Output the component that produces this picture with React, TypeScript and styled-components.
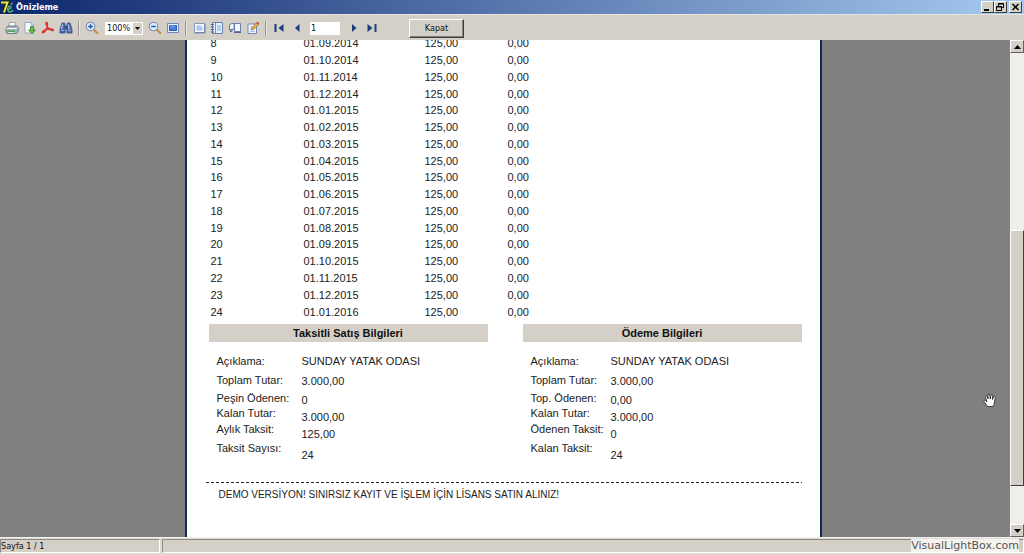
import React from 'react';
import styled, { createGlobalStyle } from 'styled-components';

const Global = createGlobalStyle`
  * { box-sizing: border-box; }
  body { margin: 0; background: #d4d0c8; }
  button, input, select { font: inherit; color: inherit; }
`;

const ui = `'DejaVu Sans Condensed', 'DejaVu Sans', Tahoma, sans-serif`;

const Window = styled.div`
  display: grid;
  grid-template-rows: auto minmax(0, 1fr) auto;
  height: 100vh;
  overflow: hidden;
  font: 9px/12px ${ui};
  color: #111;
`;

const Header = styled.header`
  background: #d4d0c8;
`;

const TitleBar = styled.div`
  display: flex;
  align-items: center;
  height: 14px;
  padding-right: 2px;
  background: linear-gradient(90deg, #0c266c 0%, #a6caf0 100%);
  color: #fff;
`;

const Title = styled.h1`
  flex: 1;
  margin: 0 0 0 2px;
  font: bold 9px/14px ${ui};
`;

const Caption = styled.div<{ $gap?: boolean }>`
  display: flex;
  margin-left: ${(p) => (p.$gap ? '2px' : '0')};
`;

const CaptionButton = styled.button`
  display: flex;
  width: 13px;
  height: 12px;
  padding: 0;
  border: 1px solid;
  border-color: #fff #404040 #404040 #fff;
  background: #d4d0c8;
`;

const Toolbar = styled.div`
  display: flex;
  align-items: center;
  height: 26px;
  padding: 1px 3px 0;
  border-top: 1px solid #e8e6e0;
`;

const ToolButton = styled.button`
  display: flex;
  align-items: center;
  justify-content: center;
  flex: none;
  width: 18px;
  height: 20px;
  padding: 0;
  border: 0;
  background: none;
`;

const Separator = styled.span`
  flex: none;
  width: 2px;
  height: 15px;
  margin: 0 3px;
  border-left: 1px solid #98958e;
  border-right: 1px solid #e8e6e0;
`;

const ZoomField = styled.div`
  position: relative;
  flex: none;
  width: 38px;
  height: 13px;
  margin: 0 3px 0 4px;
  background: #fff;
  select {
    display: block;
    appearance: none;
    width: 100%;
    height: 13px;
    padding: 0 0 0 2px;
    border: 0;
    background: none;
    line-height: 13px;
  }
  svg {
    position: absolute;
    top: 1px;
    right: 1px;
    pointer-events: none;
  }
`;

const PageInput = styled.input`
  flex: none;
  width: 30px;
  height: 13px;
  margin: 0 5px 0 4px;
  padding: 0 1px;
  border: 0;
  background: #fff;
`;

const CloseButton = styled.button`
  flex: none;
  width: 55px;
  height: 19px;
  margin-left: 28px;
  padding: 0;
  border: 1px solid;
  border-color: #fff #404040 #404040 #fff;
  box-shadow: inset -1px -1px #808080;
  background: #d4d0c8;
`;

const Viewport = styled.main`
  display: flex;
  min-height: 0;
  background: #808080;
`;

const Canvas = styled.div`
  position: relative;
  flex: 1;
  display: flex;
  justify-content: center;
  min-width: 0;
  padding-right: 4px;
  overflow: hidden;
`;

const Sheet = styled.article`
  flex: 0 1 637px;
  padding: 0 18px 0 22px;
  border: solid #14294f;
  border-width: 0 2px;
  background: #fff;
  font: 11px/16px 'Liberation Sans', Arial, sans-serif;
  color: #222;
`;

const Installments = styled.table`
  width: 100%;
  height: 285px;
  margin-top: -5px;
  border-collapse: collapse;
  table-layout: fixed;
  td { padding: 0 0 0 2px; line-height: 16px; }
`;

const Panels = styled.div`
  display: grid;
  grid-template-columns: 279px 279px;
  justify-content: space-between;
  margin-top: 4px;
`;

const PanelTitle = styled.h2`
  margin: 0;
  background: #d4d0c8;
  font-size: 11px;
  line-height: 18px;
  text-align: center;
  color: #111;
`;

const Fields = styled.div<{ $labelWidth: number }>`
  display: grid;
  grid-template-columns: ${(p) => p.$labelWidth}px 1fr;
  padding: 11px 0 0 8px;
`;

const Labels = styled.div`
  display: grid;
  grid-template-rows: 19px 18px 15px 16px 19px 16px;
`;

const Values = styled.div`
  display: grid;
  grid-template-rows: 20px 19px 17px 17px 21px 16px;
`;

const Notice = styled.p`
  margin: 0 0 0 10px;
  font-size: 10px;
  line-height: 14px;
  white-space: nowrap;
`;

const Rule = styled.svg`
  display: block;
  width: calc(100% + 3px);
  height: 1px;
  margin: 19px 0 5px -3px;
`;

const HandCursor = styled.svg`
  position: absolute;
  right: 13px;
  top: 353px;
`;

const Scrollbar = styled.div`
  display: grid;
  grid-template-rows: 13px 177fr 256fr 38fr 13px;
  width: 14px;
  background: #efeeea;
`;

const ScrollButton = styled.button<{ $row: number }>`
  grid-row: ${(p) => p.$row};
  display: flex;
  align-items: center;
  justify-content: center;
  padding: 0;
  border: 1px solid;
  border-color: #fff #606060 #606060 #fff;
  background: #d4d0c8;
`;

const Thumb = styled.div`
  grid-row: 3;
  border: 1px solid;
  border-color: #fff #404040 #404040 #fff;
  background: #d4d0c8;
`;

const Status = styled.footer`
  position: relative;
  display: grid;
  grid-template-columns: 160px 1fr;
  gap: 2px;
  height: 18px;
  padding: 1px 0 3px;
  border-top: 1px solid #f4f2ee;
  background: #dedbd4;
`;

const StatusPane = styled.div`
  border: 1px solid;
  border-color: #8c8982 #fff #fff #8c8982;
  background: #d4d0c8;
`;

const Watermark = styled.a`
  position: absolute;
  right: 5px;
  top: 1px;
  background: #f4f3f0;
  color: #555;
  font: 11px/13px 'DejaVu Sans', Verdana, sans-serif;
  text-decoration: none;
`;

const Icon = ({ children }: { children: React.ReactNode }) => (
  <svg width="14" height="14" viewBox="0 0 14 14" fill="none">{children}</svg>
);

const Lens = ({ minus }: { minus?: boolean }) => (
  <Icon>
    <path d="M8.5 8.5 12.3 12" stroke="#c89038" strokeWidth="2.2" strokeLinecap="round" />
    <circle cx="5.5" cy="5.5" r="4.3" fill="#dcebfa" stroke="#7890b4" strokeWidth="1.1" />
    <path d={minus ? 'M3.2 5.5h4.6' : 'M3.2 5.5h4.6M5.5 3.2v4.6'} stroke="#28549c" strokeWidth="1.4" />
  </Icon>
);

const icons = {
  print: (
    <Icon>
      <path d="M4.5 1.5h6l-1 5h-6z" fill="#fff" stroke="#8492a8" strokeWidth=".8" />
      <path d="M1 7 3 5h9.5l.7 1.5v4L11.5 12.5H2L1 11z" fill="#a9b3c2" stroke="#56647c" strokeWidth=".8" />
      <path d="M1.5 7.5h9.8l1.5-1.8" stroke="#eef2f8" />
      <path d="M2.5 9.5h7.5v2H2.5z" fill="#48a64c" />
      <path d="M3 11.5h6.5" stroke="#d7f0d2" />
    </Icon>
  ),
  save: (
    <Icon>
      <path d="M2 1.5h6l2.5 2.5v8H2z" fill="#f8fbff" stroke="#8ca0c0" strokeWidth=".9" />
      <path d="M8 1.5V4h2.5" stroke="#8ca0c0" strokeWidth=".8" />
      <path d="M7.5 5.5h3V9h2L9 12.8 5.5 9h2z" fill="#68b84e" stroke="#34822c" strokeWidth=".8" />
    </Icon>
  ),
  pdf: (
    <Icon>
      <path d="M5.2 1.5c1.8-.5 1.3 2.7.7 5C5.1 9.3 3 12 1.7 11.8.3 11.2 3 9 6.3 8.3c3-.7 6.5-.5 6 .8-.5 1.2-3.6-.3-5.2-2.4C5.5 4.8 4.2 2 5.2 1.5z" stroke="#d83830" strokeWidth="1.5" />
    </Icon>
  ),
  find: (
    <Icon>
      <path d="M3 2h2.5l.8 3-.3 7H1V8.5zM8.500 2H11l2 6.500V12H8l-.3-7z" fill="#5270a8" stroke="#2c4880" strokeWidth=".8" />
      <path d="M5.500 5h3v3h-3z" fill="#34508c" />
      <path d="M3.500 3.500 2.500 8M9.500 3.500l.5 4.500" stroke="#c2d6f4" />
      <path d="M2 9.500h3M9 9.500h3" stroke="#90acd8" />
    </Icon>
  ),
  fit: (
    <Icon>
      <path d="M1.500 2.500h11v9h-11z" fill="#e8f0fc" stroke="#6c88c0" />
      <path d="M3.500 4.500h7v5h-7z" fill="#4c80d4" stroke="#2c58ac" />
      <path d="M4 5h5" stroke="#8cb4f0" />
    </Icon>
  ),
  page: (
    <Icon>
      <path d="M2.500 2.500h10v9h-10z" fill="#f2f8ff" stroke="#8298bc" />
      <path d="M5 5h3.500L10 6.500V9H5z" fill="#b6cef0" stroke="#8caad8" strokeWidth=".7" />
      <path d="M2.500 12h10.500V3" stroke="#566c94" strokeWidth=".7" />
    </Icon>
  ),
  outline: (
    <Icon>
      <path d="M2.500 1.500h10v11h-10z" fill="#e4eefc" stroke="#6880ac" />
      <path d="M5.500 2v10" stroke="#7a92bc" />
      <path d="M7 4h4v6H7z" fill="#b8d0f4" />
      <path d="M1 3.500h3M1 6h3M1 8.500h3M1 11h3" stroke="#465f8c" />
    </Icon>
  ),
  thumbs: (
    <Icon>
      <path d="M1.500 3.500 4 2.500h2v5L4 8.500H1.500zM6.500 2.500h6v8h-6z" fill="#f4f8fe" stroke="#6880a8" />
      <path d="M1.500 8.500 3 11l1.500-2.500M6 11.500h7" stroke="#50648a" />
    </Icon>
  ),
  edit: (
    <Icon>
      <path d="M2 3h8.500v9.500H2z" fill="#eef5ff" stroke="#7088b4" />
      <path d="M4 6h3M4 8h2M4 10.500h5" stroke="#a2badc" />
      <path d="m5.500 9 .7-2.500 4.500-5 2 1.500L8 8z" fill="#e9b64c" stroke="#8c6430" strokeWidth=".7" />
      <path d="m10.700 1.500 2 1.500" stroke="#cc4450" strokeWidth="2" />
    </Icon>
  ),
  first: <Icon><path d="M2.500 3h2v8h-2zM11.500 3v8l-5-4z" fill="#1c3c80" /></Icon>,
  prev: <Icon><path d="M9.500 3v8L5 7z" fill="#1c3c80" /></Icon>,
  next: <Icon><path d="M5 3v8l4.500-4z" fill="#1c3c80" /></Icon>,
  last: <Icon><path d="M9.500 3h2v8h-2zM2.500 3v8l5-4z" fill="#1c3c80" /></Icon>,
};

const Tool = ({ label, children }: { label: string; children: React.ReactNode }) => (
  <ToolButton type="button" aria-label={label}>{children}</ToolButton>
);

const rows = Array.from({ length: 17 }, (_, i) => {
  const month = (8 + i) % 12;
  const year = 2014 + Math.floor((8 + i) / 12);
  return { no: 8 + i, date: `01.${String(month + 1).padStart(2, '0')}.${year}` };
});

const sale = [
  ['Açıklama:', 'SUNDAY YATAK ODASI'],
  ['Toplam Tutar:', '3.000,00'],
  ['Peşin Ödenen:', '0'],
  ['Kalan Tutar:', '3.000,00'],
  ['Aylık Taksit:', '125,00'],
  ['Taksit Sayısı:', '24'],
];

const payment = [
  ['Açıklama:', 'SUNDAY YATAK ODASI'],
  ['Toplam Tutar:', '3.000,00'],
  ['Top. Ödenen:', '0,00'],
  ['Kalan Tutar:', '3.000,00'],
  ['Ödenen Taksit:', '0'],
  ['Kalan Taksit:', '24'],
];

const Panel = ({ title, data, labelWidth }: { title: string; data: string[][]; labelWidth: number }) => (
  <section>
    <PanelTitle>{title}</PanelTitle>
    <Fields $labelWidth={labelWidth}>
      <Labels>{data.map(([label]) => <span key={label}>{label}</span>)}</Labels>
      <Values>{data.map(([label, value]) => <span key={label}>{value}</span>)}</Values>
    </Fields>
  </section>
);

export default function App() {
  return (
    <Window>
      <Global />
      <Header>
        <TitleBar>
          <svg width="14" height="14" viewBox="0 0 14 14" fill="none">
            <path d="M1 2.500h6.500L4 12.500" stroke="#203008" strokeWidth="3.400" />
            <path d="M1 2.500h6.500L4 12.500" stroke="#f0e040" strokeWidth="2" />
            <path d="M7 9.500c3.500 0 5-2 3.500-3S7 8 8 10.500s3.500 1.500 5-.5M11 5l1.500-2.500" stroke="#58b878" strokeWidth="1.400" />
          </svg>
          <Title>Önizleme</Title>
          <Caption>
            <CaptionButton type="button" aria-label="Simge durumuna küçült">
              <svg width="10" height="10"><path d="M2 7h5v2H2z" fill="#000" /></svg>
            </CaptionButton>
            <CaptionButton type="button" aria-label="Önceki boyut">
              <svg width="10" height="10" fill="none" stroke="#000">
                <path d="M3.500 4V1.500h5v4H7M3 2h6M1.500 4.500h5v4h-5zM1 5h6" />
              </svg>
            </CaptionButton>
          </Caption>
          <Caption $gap>
            <CaptionButton type="button" aria-label="Kapat">
              <svg width="11" height="10"><path d="m2.500 2 6 6M8.500 2l-6 6" stroke="#000" strokeWidth="1.500" /></svg>
            </CaptionButton>
          </Caption>
        </TitleBar>
        <Toolbar>
          <Tool label="Yazdır">{icons.print}</Tool>
          <Tool label="Kaydet">{icons.save}</Tool>
          <Tool label="PDF">{icons.pdf}</Tool>
          <Tool label="Bul">{icons.find}</Tool>
          <Separator />
          <Tool label="Yakınlaştır"><Lens /></Tool>
          <ZoomField>
            <select aria-label="Yakınlık" defaultValue="100%"><option>100%</option></select>
            <svg width="9" height="11"><path d="M0 0h9v11H0z" fill="#d4d0c8" /><path d="M2 4h5L4.500 7z" fill="#000" /></svg>
          </ZoomField>
          <Tool label="Uzaklaştır"><Lens minus /></Tool>
          <Tool label="Tam sayfa">{icons.fit}</Tool>
          <Separator />
          <Tool label="Sayfa">{icons.page}</Tool>
          <Tool label="Anahat">{icons.outline}</Tool>
          <Tool label="Küçük resimler">{icons.thumbs}</Tool>
          <Tool label="Düzenle">{icons.edit}</Tool>
          <Separator />
          <Tool label="İlk sayfa">{icons.first}</Tool>
          <Tool label="Önceki sayfa">{icons.prev}</Tool>
          <PageInput aria-label="Sayfa numarası" defaultValue="1" />
          <Tool label="Sonraki sayfa">{icons.next}</Tool>
          <Tool label="Son sayfa">{icons.last}</Tool>
          <CloseButton type="button">Kapat</CloseButton>
        </Toolbar>
      </Header>
      <Viewport>
        <Canvas>
          <Sheet>
            <Installments>
              <colgroup>
                <col width="93" /><col width="121" /><col width="83" /><col />
              </colgroup>
              <tbody>
                {rows.map((r) => (
                  <tr key={r.no}><td>{r.no}</td><td>{r.date}</td><td>125,00</td><td>0,00</td></tr>
                ))}
              </tbody>
            </Installments>
            <Panels>
              <Panel title="Taksitli Satış Bilgileri" data={sale} labelWidth={85} />
              <Panel title="Ödeme Bilgileri" data={payment} labelWidth={80} />
            </Panels>
            <Rule><path d="M0 .5h2000" stroke="#222" strokeDasharray="3 2" /></Rule>
            <Notice>DEMO VERSİYON! SINIRSIZ KAYIT VE İŞLEM İÇİN LİSANS SATIN ALINIZ!</Notice>
          </Sheet>
          <HandCursor width="14" height="15" viewBox="0 0 14 15">
            <path d="M4.500 13.500 1 8.500c-.6-1.300 1-1.700 1.800-.5L4 9 2.500 4c-.2-1.500 1.300-1.700 1.700-.4L5.200 6 5 2c.1-1.500 1.700-1.500 1.800 0l.5 4L8 2.300c.3-1.300 1.800-1.100 1.700.3L9.500 6.500l1.200-2.600c.6-1.200 2-.6 1.600.7L11.500 9c-.4 2-1 3-1.500 4.500z" fill="#fff" stroke="#222" strokeWidth=".8" />
          </HandCursor>
        </Canvas>
        <Scrollbar>
          <ScrollButton $row={1} type="button" aria-label="Yukarı kaydır">
            <svg width="7" height="4"><path d="M3.500 0 7 4H0z" fill="#000" /></svg>
          </ScrollButton>
          <Thumb />
          <ScrollButton $row={5} type="button" aria-label="Aşağı kaydır">
            <svg width="7" height="4"><path d="M0 0h7L3.500 4z" fill="#000" /></svg>
          </ScrollButton>
        </Scrollbar>
      </Viewport>
      <Status>
        <StatusPane>Sayfa 1 / 1</StatusPane>
        <StatusPane />
        <Watermark href="#">VisualLightBox.com</Watermark>
      </Status>
    </Window>
  );
}
